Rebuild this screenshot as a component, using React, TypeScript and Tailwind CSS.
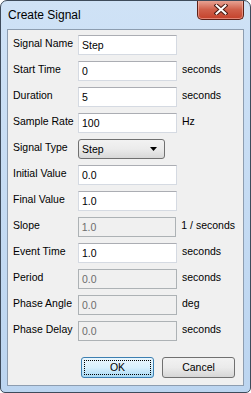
const rows: { label: string; value: string; unit?: string; disabled?: boolean; select?: boolean }[] = [
  { label: "Signal Name", value: "Step" },
  { label: "Start Time", value: "0", unit: "seconds" },
  { label: "Duration", value: "5", unit: "seconds" },
  { label: "Sample Rate", value: "100", unit: "Hz" },
  { label: "Signal Type", value: "Step", select: true },
  { label: "Initial Value", value: "0.0" },
  { label: "Final Value", value: "1.0" },
  { label: "Slope", value: "1.0", unit: "1 / seconds", disabled: true },
  { label: "Event Time", value: "1.0", unit: "seconds" },
  { label: "Period", value: "0.0", unit: "seconds", disabled: true },
  { label: "Phase Angle", value: "0.0", unit: "deg", disabled: true },
  { label: "Phase Delay", value: "0.0", unit: "seconds", disabled: true },
];

function CloseButton() {
  return (
    <div className="w-[47px] h-[20px] -mt-[1px] rounded-b-[5px] border border-[#5d2118] border-t-0 bg-gradient-to-b from-[#e9a99b] via-[#d0604b] to-[#c4412a] flex items-center justify-center shadow-[inset_0_0_0_1px_rgba(255,200,190,0.5)]">
      <svg width="14" height="11" viewBox="0 0 14 11">
        <path d="M2.5 1.5 L11.5 9.5 M11.5 1.5 L2.5 9.5" stroke="#4a1a12" strokeWidth="4" strokeLinecap="square" />
        <path d="M2.5 1.5 L11.5 9.5 M11.5 1.5 L2.5 9.5" stroke="#ffffff" strokeWidth="2" strokeLinecap="square" />
      </svg>
    </div>
  );
}

function Field({ value, disabled }: { value: string; disabled?: boolean }) {
  return (
    <div
      className={`w-[99px] h-[20px] border flex items-center pl-[3px] ${
        disabled
          ? "bg-[#f0f0f0] border-[#adb2b5] text-[#6d6d6d]"
          : "bg-white border-[#d5dae2] border-t-[#abadb3] text-black"
      }`}
    >
      <span className="pt-[1px]">{value}</span>
    </div>
  );
}

function Select({ value }: { value: string }) {
  return (
    <div className="w-[87px] h-[20px] rounded-[3px] border border-[#707070] bg-gradient-to-b from-[#f2f2f2] via-[#ebebeb] to-[#d8d8d8] flex items-center justify-between pl-[3px] pr-[7px]">
      <span className="pt-[1px]">{value}</span>
      <svg width="7" height="4" viewBox="0 0 7 4">
        <path d="M0 0 H7 L3.5 4 Z" fill="#000" />
      </svg>
    </div>
  );
}

export default function App() {
  return (
    <div className="w-[251px] h-[393px] border border-[#3e4b5b] rounded-t-[7px] rounded-b-[5px] bg-gradient-to-b from-[#cfe2f6] to-[#bcd5f0] flex flex-col px-[6px] pb-[6px] font-['Liberation_Sans',Arial,sans-serif] text-[10.5px] leading-[13px] text-black overflow-hidden">
      <div className="h-[28px] flex items-start justify-between shrink-0">
        <span className="text-[12px] mt-[8px] ml-[1px]">Create Signal</span>
        <CloseButton />
      </div>
      <div className="flex-1 border border-[#8d9db0] bg-[#f0f0f0] flex flex-col pt-[5px] pl-[5px] pr-[8px]">
        <div className="flex flex-col gap-[6px]">
          {rows.map((r) => (
            <div key={r.label} className="flex items-start h-[20px]">
              <span className="w-[65px] pt-[2px] whitespace-nowrap">{r.label}</span>
              {r.select ? <Select value={r.value} /> : <Field value={r.value} disabled={r.disabled} />}
              {r.unit && <span className="ml-[5px] pt-[2px] whitespace-nowrap">{r.unit}</span>}
            </div>
          ))}
        </div>
        <div className="flex justify-end gap-[8px] mt-[16px]">
          <div className="w-[73px] h-[21px] rounded-[3px] border border-[#3c7fb1] bg-gradient-to-b from-[#eaf6fd] via-[#d9f0fc] to-[#a7d9f5] p-[2px]">
            <div className="w-full h-full border border-dotted border-black flex items-center justify-center">
              OK
            </div>
          </div>
          <div className="w-[73px] h-[21px] rounded-[3px] border border-[#707070] bg-gradient-to-b from-[#f2f2f2] via-[#ebebeb] to-[#d6d6d6] flex items-center justify-center">
            Cancel
          </div>
        </div>
      </div>
    </div>
  );
}
